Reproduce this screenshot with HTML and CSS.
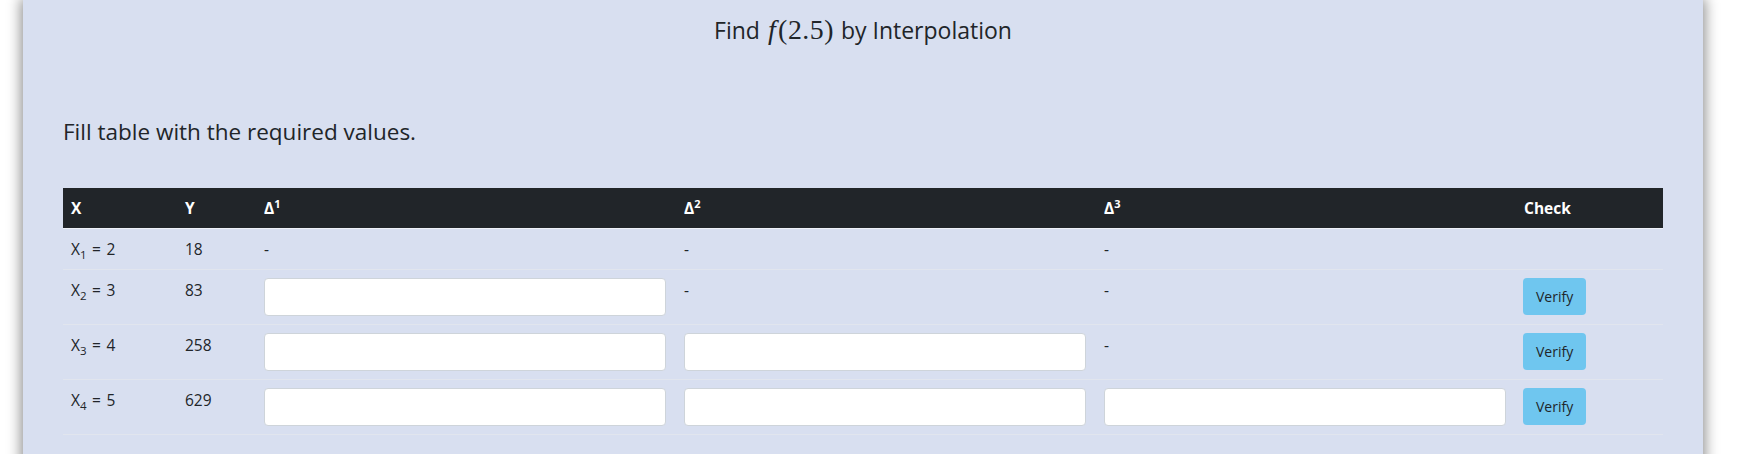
FILE: index.html
```html
<!DOCTYPE html>
<html lang="en">
<head>
<meta charset="utf-8">
<title>Interpolation</title>
<link rel="stylesheet" href="styles.css">
</head>
<body>
<main class="panel">
  <h4 class="title">Find <span class="math"><span class="mi">f</span>(2.5)</span> by Interpolation</h4>
  <p class="lead">Fill table with the required values.</p>
  <table class="grid">
    <colgroup>
      <col class="c-x"><col class="c-y"><col class="c-d"><col class="c-d"><col class="c-d"><col class="c-check">
    </colgroup>
    <thead>
      <tr>
        <th>X</th><th>Y</th><th>Δ<sup>1</sup></th><th>Δ<sup>2</sup></th><th>Δ<sup>3</sup></th><th>Check</th>
      </tr>
    </thead>
    <tbody>
      <tr>
        <td class="xv">X<sub>1</sub> = 2</td><td>18</td><td>-</td><td>-</td><td>-</td><td></td>
      </tr>
      <tr>
        <td class="xv">X<sub>2</sub> = 3</td><td>83</td>
        <td><input class="field" type="text"></td><td>-</td><td>-</td>
        <td><button class="verify" type="button">Verify</button></td>
      </tr>
      <tr>
        <td class="xv">X<sub>3</sub> = 4</td><td>258</td>
        <td><input class="field" type="text"></td><td><input class="field" type="text"></td><td>-</td>
        <td><button class="verify" type="button">Verify</button></td>
      </tr>
      <tr>
        <td class="xv">X<sub>4</sub> = 5</td><td>629</td>
        <td><input class="field" type="text"></td><td><input class="field" type="text"></td><td><input class="field" type="text"></td>
        <td><button class="verify" type="button">Verify</button></td>
      </tr>
    </tbody>
  </table>
</main>
</body>
</html>
```
FILE: styles.css
```css
html, body {
  margin: 0;
  padding: 0;
  background: #ffffff;
  height: 454px;
  overflow: hidden;
}

body {
  font-family: "Open Sans", "Noto Sans", sans-serif;
  color: #212529;
}

.panel {
  margin-left: 23px;
  width: 1680px;
  height: 600px;
  box-sizing: border-box;
  padding: 14px 40px 0;
  background: #d8dff0;
  box-shadow: 0 0 13px 2px rgba(0, 0, 0, 0.45);
}

.title {
  margin: 0;
  text-align: center;
  font-size: 23px;
  font-weight: 400;
  line-height: 32px;
}

.math {
  font-family: "Liberation Serif", "DejaVu Serif", serif;
  font-size: 1.21em;
  letter-spacing: 0.5px;
  margin: 0 1px 0 2px;
}

.mi {
  font-style: italic;
  margin-right: 2px;
}

.lead {
  margin: 71px 0 0;
  font-size: 22.5px;
  line-height: 30px;
  font-weight: 400;
}

.grid {
  margin-top: 41px;
  width: 1600px;
  border-collapse: collapse;
  table-layout: fixed;
  font-size: 15.5px;
}

.c-x { width: 114px; }
.c-y { width: 79px; }
.c-d { width: 420px; }
.c-check { width: 147px; }

.grid th {
  background: #212529;
  color: #ffffff;
  font-weight: 700;
  text-align: left;
  height: 40px;
  padding: 0 8px;
  line-height: 24px;
  border-bottom: 1px solid #eef1f7;
  box-sizing: border-box;
}

.grid sup {
  font-size: 11px;
  line-height: 0;
  vertical-align: 6px;
}

.grid sub {
  font-size: 11.5px;
  line-height: 0;
  vertical-align: -4px;
}

.grid td {
  padding: 8px;
  line-height: 24px;
  vertical-align: top;
  border-bottom: 1px solid #e1e5ee;
}

.xv {
  word-spacing: 1.5px;
}

.field {
  display: block;
  width: 402px;
  height: 38px;
  box-sizing: border-box;
  margin: 0;
  border: 1px solid #ced4da;
  border-radius: 4px;
  background: #ffffff;
  padding: 6px 12px;
  font: inherit;
}

.verify {
  display: block;
  height: 37px;
  padding: 0 13px;
  margin: 0 0 0 -1px;
  border: none;
  border-radius: 4px;
  background: #6fc6ef;
  color: #212529;
  font-family: inherit;
  font-size: 14px;
}
```
